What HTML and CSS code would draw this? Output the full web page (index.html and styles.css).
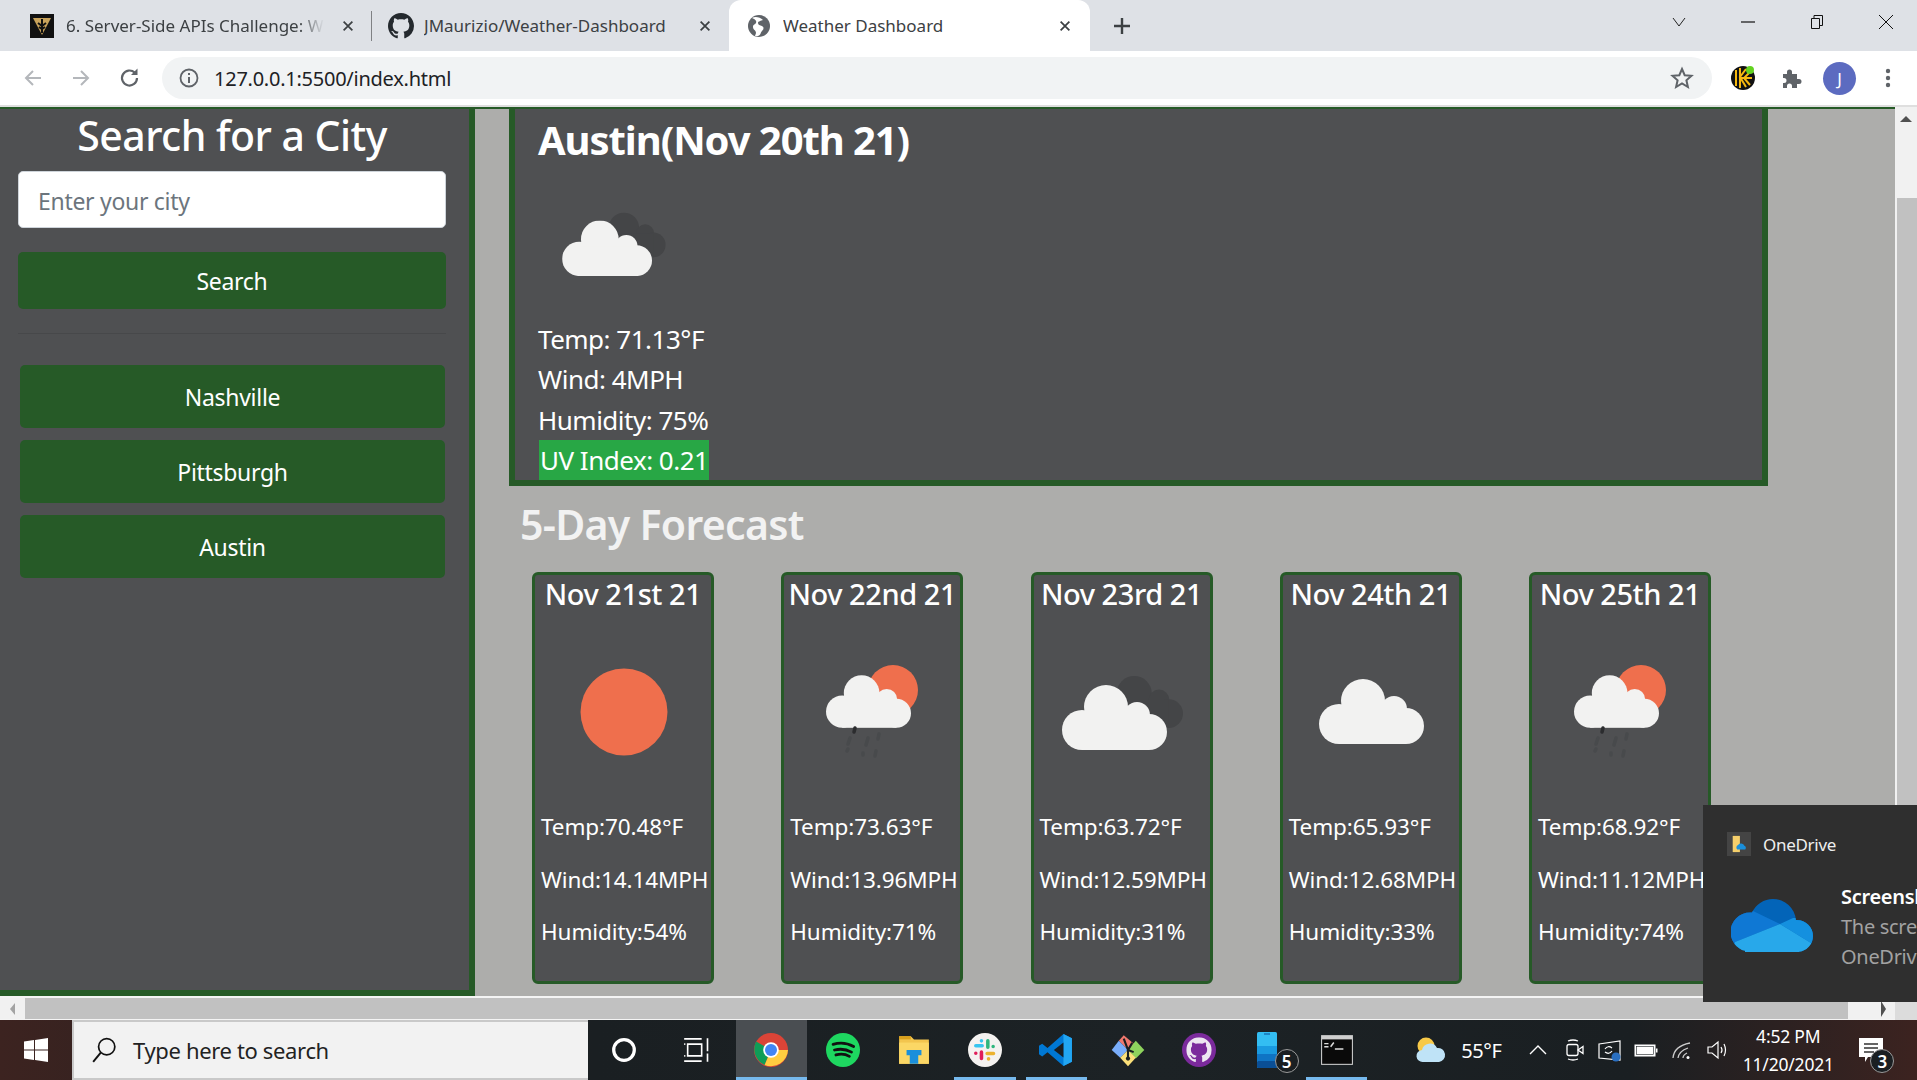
FILE: index.html
```html
<!DOCTYPE html>
<html lang="en">
<head>
<meta charset="utf-8">
<title>Weather Dashboard</title>
<link rel="stylesheet" href="styles.css">
</head>
<body>
<svg class="defs" width="0" height="0" aria-hidden="true">
  <defs>
    <symbol id="cloud" viewBox="0 0 105 65">
      <circle cx="20" cy="45" r="20"/><circle cx="44" cy="22" r="22"/><circle cx="75" cy="30" r="13"/><circle cx="87" cy="47" r="18"/><rect x="20" y="30" width="67" height="35"/>
    </symbol>
    <symbol id="ic-sun" viewBox="0 0 160 160"><ellipse cx="81" cy="80" rx="43.5" ry="43.5" fill="#ef6f4d"/></symbol>
    <symbol id="ic-clouds" viewBox="0 0 160 160">
      <use href="#cloud" x="57" y="42" width="84" height="56" fill="#444547"/>
      <use href="#cloud" x="20" y="53" width="105" height="65" fill="#f2f2f1"/>
    </symbol>
    <symbol id="ic-overcast" viewBox="0 0 160 160"><use href="#cloud" x="28" y="47" width="105" height="65" fill="#f2f2f1"/></symbol>
    <symbol id="ic-rain" viewBox="0 0 160 160">
      <circle cx="101" cy="58" r="25" fill="#ef6f4d"/>
      <use href="#cloud" x="34" y="43" width="85" height="53" fill="#f2f2f1"/>
      <path d="M63 96l-1 4" stroke="#2b2c2e" stroke-width="3.5" stroke-linecap="round"/>
      <path d="M58 106l-2 6M56 117l-1 2M76 106l-2 7M71 121l0 2M87 102l-1 5M84 119l-1 5" stroke="#484a4c" stroke-width="3.500" stroke-linecap="round"/>
    </symbol>
    <symbol id="ic-x" viewBox="0 0 16 16"><path d="M3 3l10 10M13 3L3 13" fill="none" stroke="#3c4043" stroke-width="2"/></symbol>
    <symbol id="ic-gh" viewBox="0 0 16 16"><path d="M8 0C3.58 0 0 3.58 0 8c0 3.54 2.29 6.53 5.47 7.59.4.07.55-.17.55-.38 0-.19-.01-.82-.01-1.49-2.01.37-2.53-.49-2.69-.94-.09-.23-.48-.94-.82-1.13-.28-.15-.68-.52-.01-.53.63-.01 1.08.58 1.23.82.72 1.21 1.87.87 2.33.66.07-.52.28-.87.51-1.07-1.78-.2-3.64-.89-3.64-3.95 0-.87.31-1.59.82-2.15-.08-.2-.36-1.02.08-2.12 0 0 .67-.21 2.2.82.64-.18 1.32-.27 2-.27s1.36.09 2 .27c1.53-1.04 2.2-.82 2.2-.82.44 1.1.16 1.92.08 2.12.51.56.82 1.27.82 2.15 0 3.07-1.87 3.75-3.65 3.95.29.25.54.73.54 1.48 0 1.07-.01 1.93-.01 2.2 0 .21.15.46.55.38A8.01 8.01 0 0016 8c0-4.42-3.58-8-8-8z"/></symbol>
    <clipPath id="od-clip"><circle cx="19" cy="33" r="19.500"/><circle cx="42" cy="23" r="23"/><circle cx="66" cy="37" r="16"/><rect x="14" y="30" width="54" height="23"/></clipPath>
  </defs>
</svg>

<div class="screen">
  <header class="tabstrip">
    <div class="tab tab-one">
      <svg class="favicon" viewBox="0 0 24 24"><rect width="24" height="24" fill="#111"/><path d="M3 4h18l-9 17z" fill="#c8a25a"/><path d="M12 5v14M8 9l4 3 4-3M9 13l3 2 3-2" stroke="#111" stroke-width="2" fill="none"/></svg>
      <span class="tab-title tab-title-fade">6. Server-Side APIs Challenge: We</span>
      <svg class="tab-x"><use href="#ic-x"/></svg>
    </div>
    <span class="tab-sep"></span>
    <div class="tab tab-two">
      <svg class="favicon fill-dark"><use href="#ic-gh"/></svg>
      <span class="tab-title">JMaurizio/Weather-Dashboard</span>
      <svg class="tab-x"><use href="#ic-x"/></svg>
    </div>
    <div class="tab tab-active">
      <svg class="favicon" viewBox="0 0 24 24"><circle cx="12" cy="12" r="11" fill="#5f6368"/><path d="M5 4c3 1 5 3 4 5s-3 1-3 4 3 3 3 6l-1 3c6 1 5-3 7-5s2-4 0-5-4-1-4-3 3-2 5-3c-3-3-8-4-11-2z" fill="#fff"/></svg>
      <span class="tab-title">Weather Dashboard</span>
      <svg class="tab-x"><use href="#ic-x"/></svg>
    </div>
    <svg class="new-tab" viewBox="0 0 20 20"><path d="M10 2v16M2 10h16" stroke="#3c4043" stroke-width="2.4"/></svg>
    <div class="window-controls">
      <svg viewBox="0 0 16 16"><path d="M2 4l6 8 6-8" fill="none" stroke="#222" stroke-width="1"/></svg>
      <svg viewBox="0 0 16 16"><path d="M1 8h14" stroke="#111" stroke-width="1.2"/></svg>
      <svg viewBox="0 0 16 16"><path d="M2.5 4.500h8v10h-8zM5 4.500v-3h8.500v10h-3" fill="none" stroke="#111" stroke-width="1"/></svg>
      <svg viewBox="0 0 16 16"><path d="M1 1l14 14M15 1L1 15" stroke="#111" stroke-width="1"/></svg>
    </div>
  </header>

  <nav class="toolbar">
    <svg class="tool" viewBox="0 0 24 24"><path d="M20 12H5M12 5l-7 7 7 7" fill="none" stroke="#b4b7bb" stroke-width="2"/></svg>
    <svg class="tool" viewBox="0 0 24 24"><path d="M4 12h15M12 5l7 7-7 7" fill="none" stroke="#b4b7bb" stroke-width="2"/></svg>
    <svg class="tool" viewBox="0 0 24 24"><path d="M19 12a7.500 7.500 0 1 1-2.300-5.400" fill="none" stroke="#5f6368" stroke-width="2.200"/><path d="M19.500 2.500v6.500H13z" fill="#5f6368"/></svg>
    <div class="omnibox">
      <svg class="info" viewBox="0 0 20 20"><circle cx="10" cy="10" r="8.500" fill="none" stroke="#5f6368" stroke-width="1.800"/><path d="M10 9v6M10 5v2" stroke="#5f6368" stroke-width="2"/></svg>
      <span class="url">127.0.0.1:5500/index.html</span>
      <svg class="star" viewBox="0 0 24 24"><path d="M12 3l2.700 6.200 6.800.6-5.100 4.500 1.500 6.700L12 17.500 6.100 21l1.500-6.700-5.100-4.500 6.800-.6z" fill="none" stroke="#5f6368" stroke-width="2"/></svg>
    </div>
    <div class="ext-group">
      <svg class="ext" viewBox="0 0 24 24"><circle cx="12" cy="12" r="12" fill="#111"/><path d="M5 4v16M9 2v20M15 3l-6 8 6 10M19 6l-6 6 6 7M9 12h12" stroke="#f6b80f" stroke-width="2" fill="none"/><circle cx="19" cy="4" r="4" fill="#62d320"/></svg>
      <svg class="ext" viewBox="0 0 24 24"><path d="M4 8h4V6a2.500 2.500 0 0 1 5 0v2h5v5h2a2.500 2.500 0 0 1 0 5h-2v4h-5v-2a2.500 2.500 0 0 0-5 0v2H4v-5h1a2.500 2.500 0 0 0 0-5H4z" fill="#5f6368"/></svg>
      <span class="avatar">J</span>
      <svg class="ext" viewBox="0 0 24 24"><circle cx="12" cy="5" r="2.200" fill="#5f6368"/><circle cx="12" cy="12" r="2.200" fill="#5f6368"/><circle cx="12" cy="19" r="2.200" fill="#5f6368"/></svg>
    </div>
  </nav>

  <div class="viewport">
    <div class="viewport-main">
      <div class="page">
        <aside class="sidebar">
          <h1 class="sidebar-title">Search for a City</h1>
          <input class="city-input" type="text" placeholder="Enter your city">
          <button class="btn btn-search">Search</button>
          <hr class="rule">
          <button class="btn btn-city">Nashville</button>
          <button class="btn btn-city">Pittsburgh</button>
          <button class="btn btn-city">Austin</button>
        </aside>
        <main class="content">
          <section class="today">
            <h2 class="today-title">Austin(Nov 20th 21)</h2>
            <svg class="today-icon"><use href="#ic-clouds"/></svg>
            <p class="today-line">Temp: 71.13°F</p>
            <p class="today-line">Wind: 4MPH</p>
            <p class="today-line">Humidity: 75%</p>
            <p class="today-line"><span class="uv">UV Index: 0.21</span></p>
          </section>
          <h2 class="forecast-title">5-Day Forecast</h2>
          <div class="cards">
            <article class="card">
              <h3 class="card-date">Nov 21st 21</h3>
              <svg class="card-icon"><use href="#ic-sun"/></svg>
              <p class="card-line">Temp:70.48°F</p>
              <p class="card-line">Wind:14.14MPH</p>
              <p class="card-line">Humidity:54%</p>
            </article>
            <article class="card">
              <h3 class="card-date">Nov 22nd 21</h3>
              <svg class="card-icon"><use href="#ic-rain"/></svg>
              <p class="card-line">Temp:73.63°F</p>
              <p class="card-line">Wind:13.96MPH</p>
              <p class="card-line">Humidity:71%</p>
            </article>
            <article class="card">
              <h3 class="card-date">Nov 23rd 21</h3>
              <svg class="card-icon"><use href="#ic-clouds"/></svg>
              <p class="card-line">Temp:63.72°F</p>
              <p class="card-line">Wind:12.59MPH</p>
              <p class="card-line">Humidity:31%</p>
            </article>
            <article class="card">
              <h3 class="card-date">Nov 24th 21</h3>
              <svg class="card-icon"><use href="#ic-overcast"/></svg>
              <p class="card-line">Temp:65.93°F</p>
              <p class="card-line">Wind:12.68MPH</p>
              <p class="card-line">Humidity:33%</p>
            </article>
            <article class="card">
              <h3 class="card-date">Nov 25th 21</h3>
              <svg class="card-icon"><use href="#ic-rain"/></svg>
              <p class="card-line">Temp:68.92°F</p>
              <p class="card-line">Wind:11.12MPH</p>
              <p class="card-line">Humidity:74%</p>
            </article>
          </div>
        </main>
      </div>
      <div class="hscroll">
        <span class="hscroll-btn"><i class="arrow-left"></i></span>
        <span class="hscroll-thumb"></span>
        <span class="hscroll-end"><i class="arrow-right"></i></span>
      </div>
    </div>
    <div class="vscroll">
      <span class="vscroll-track"><i class="arrow-up"></i></span>
      <span class="vscroll-thumb"></span>
      <span class="vscroll-corner"></span>
    </div>
  </div>

  <footer class="taskbar">
    <div class="start">
      <svg viewBox="0 0 24 24"><path d="M0 3.500l10-1.400v9.400H0zM11 2l13-2v11.500H11zM0 12.500h10v9.400L0 20.500zM11 12.500h13V24l-13-2z" fill="#fff"/></svg>
    </div>
    <div class="search-box">
      <svg viewBox="0 0 24 24"><circle cx="14.500" cy="9" r="7.500" fill="none" stroke="#111" stroke-width="1.600"/><path d="M9 14.500L2 23" stroke="#111" stroke-width="1.800"/></svg>
      <span>Type here to search</span>
    </div>
    <div class="task-item task-cortana">
      <svg viewBox="0 0 24 24"><circle cx="12" cy="12" r="9.500" fill="none" stroke="#fff" stroke-width="3"/></svg>
    </div>
    <div class="task-item task-view">
      <svg viewBox="0 0 24 24"><path d="M1 2.500h15M1 21.500h15M4 7h12v10H4zM1 7h1M1 17h1M21 2v11M21 15v7" fill="none" stroke="#fff" stroke-width="1.400"/></svg>
    </div>
    <div class="task-item task-active">
      <svg viewBox="0 0 48 48"><circle cx="24" cy="24" r="24" fill="#db4437"/><path d="M24 24L3 12a24 24 0 0 0 12 33z" fill="#0f9d58"/><path d="M24 24l-9 21a24 24 0 0 0 33-21z" fill="#ffcd40"/><circle cx="24" cy="24" r="11" fill="#fff"/><circle cx="24" cy="24" r="8.500" fill="#4285f4"/></svg>
    </div>
    <div class="task-item">
      <svg viewBox="0 0 48 48"><circle cx="24" cy="24" r="24" fill="#1ed760"/><path d="M10 16c10-3 20-2 29 3M12 24c8-2 17-1 24 3M14 31c7-2 14-1 19 2" fill="none" stroke="#111" stroke-width="4" stroke-linecap="round"/></svg>
    </div>
    <div class="task-item">
      <svg viewBox="0 0 32 32"><path d="M2 3h11l3 3h14v23H2z" fill="#f3c54e"/><path d="M2 3h11v3H2z" fill="#d9a01c"/><path d="M2 9h28v20H2z" fill="#fbd765"/><path d="M9 16h14v5h-3v8h-8v-8H9z" fill="#1a8fdb"/></svg>
    </div>
    <div class="task-item task-open">
      <svg viewBox="0 0 48 48"><circle cx="24" cy="24" r="24" fill="#f4f2f0"/><g fill="none" stroke-width="5" stroke-linecap="round"><path d="M11 18h9M19 11v.1" stroke="#36c5f0"/><path d="M28 11v9M35.500 19v.1" stroke="#2eb67d"/><path d="M27 29h9M29 36.500v.1" stroke="#ecb22e"/><path d="M19 27v9M11 28.500v.1" stroke="#e01e5a"/></g></svg>
    </div>
    <div class="task-item task-open">
      <svg viewBox="0 0 32 32"><path d="M23 1l8 4v22l-8 4L8 18l-5 4-3-2v-8l3-2 5 4z" fill="#0078d4"/><path d="M23 1l8 4v22l-8 4z" fill="#22a6f2"/><path d="M23 9l-9 7 9 7z" fill="#1a1f22"/></svg>
    </div>
    <div class="task-item">
      <svg viewBox="0 0 48 48"><path d="M24 24L11 11l7-8 15 13z" fill="#f0786e"/><path d="M24 24L11 11 1 24l12 11z" fill="#7aaefb"/><path d="M24 24l11-13 12 13-12 12z" fill="#8ed35d"/><path d="M24 24L13 35l11 12 11-12z" fill="#fbe07a"/><path d="M18 8l6 16v12M30 14l-6 10 8 3" fill="none" stroke="#1a1f22" stroke-width="3"/><circle cx="24" cy="36" r="3" fill="#1a1f22"/></svg>
    </div>
    <div class="task-item">
      <svg viewBox="0 0 48 48"><circle cx="24" cy="24" r="24" fill="#7b2a9c"/><use href="#ic-gh" x="6" y="6" width="36" height="36" fill="#ede6f1"/></svg>
    </div>
    <div class="task-item task-badged">
      <svg class="phone" viewBox="0 0 20 36"><rect width="20" height="36" rx="1.500" fill="#33bdf2"/><rect y="14" width="20" height="8" fill="#1a9ae0"/><rect y="22" width="20" height="7" fill="#0f74c4"/><rect y="29" width="20" height="7" rx="1" fill="#0a4f96"/><rect x="7" y="1.500" width="6" height="1" fill="#0a4f96"/></svg>
      <span class="badge">5</span>
    </div>
    <div class="task-item task-open task-cmd">
      <svg viewBox="0 0 32 32"><rect x="1" y="2" width="30" height="28" fill="#cfcfcf"/><rect x="2" y="6" width="28" height="23" fill="#0a0a0a"/><path d="M4 10h4M4 13h4M10 13l3-4M14 15h8" stroke="#ddd" stroke-width="1.400"/></svg>
    </div>
    <div class="tray">
      <svg class="tray-weather" viewBox="0 0 32 28"><circle cx="11" cy="10" r="8.500" fill="#f7c948"/><path d="M8 26a6 6 0 0 1-1-12 8 8 0 0 1 15-2 7 7 0 0 1 2 14z" fill="#bfe3f7"/></svg>
      <span class="tray-temp">55°F</span>
      <svg class="tray-icon" viewBox="0 0 24 24"><path d="M4 16l8-8 8 8" fill="none" stroke="#fff" stroke-width="1.400"/></svg>
      <svg class="tray-icon" viewBox="0 0 24 24"><rect x="5" y="6.500" width="11" height="11" rx="2" fill="none" stroke="#fff" stroke-width="1.300"/><path d="M16 12l5-3.500v7zM6 3q5-2 10 0M6 21q5 2 10 0" fill="none" stroke="#fff" stroke-width="1.300"/></svg>
      <svg class="tray-icon" viewBox="0 0 24 24"><path d="M1 6l21-3v19l-21-2z" fill="none" stroke="#fff" stroke-width="1.200"/><path d="M7 11q3-4 7-1M14 13q-3 4-7 1" fill="none" stroke="#fff" stroke-width="1.200"/><circle cx="18" cy="19" r="4.500" fill="#2a6fc0"/></svg>
      <svg class="tray-icon" viewBox="0 0 24 24"><rect x="1" y="7" width="20" height="11" fill="#fff" stroke="#fff"/><rect x="2.500" y="8.500" width="17" height="8" fill="#fff" stroke="#1a1f22" stroke-width=".6"/><rect x="22" y="10.500" width="1.500" height="4" fill="#fff"/></svg>
      <svg class="tray-icon" viewBox="0 0 24 24"><path d="M3 20q1-12 17-15M8 20q1-7 10-10M13 20q0-3 4-5" fill="none" stroke="#ccc" stroke-width="1.300"/><circle cx="18" cy="19.500" r="1.500" fill="#fff"/></svg>
      <svg class="tray-icon" viewBox="0 0 24 24"><path d="M2 9h4l6-5v16l-6-5H2zM15 9q2 3 0 6M18 6q3 6 0 12" fill="none" stroke="#fff" stroke-width="1.200"/></svg>
      <div class="clock"><span>4:52 PM</span><span>11/20/2021</span></div>
      <div class="notif">
        <svg viewBox="0 0 24 24"><path d="M0 0h24v19H9l-3 5v-5H0z" fill="#fff"/><path d="M5 6h14M5 10h14M5 14h10" stroke="#333" stroke-width="1.400"/></svg>
        <span class="badge">3</span>
      </div>
    </div>
  </footer>

  <aside class="toast">
    <div class="toast-head">
      <span class="toast-app">
        <svg viewBox="0 0 20 20"><path d="M3 1h8v18H3z" fill="#f5cf6b"/><path d="M8 16a3 3 0 0 1 1-5 4 4 0 0 1 7 1 2.500 2.500 0 0 1 1 4z" fill="#1a8fdb"/></svg>
      </span>
      <span>OneDrive</span>
    </div>
    <div class="toast-body">
      <svg class="toast-cloud" viewBox="0 0 82 53"><g clip-path="url(#od-clip)"><rect width="82" height="53" fill="#0364b8"/><path d="M0 11h20l29 14L4 43l-4 10z" fill="#0f78d4"/><path d="M49 25l13-6h20v34l-2-9z" fill="#1490df"/><path d="M49 25l31 19 2 9H0l4-10z" fill="#28a8ea"/></g></svg>
      <div class="toast-text">
        <strong>Screenshot saved</strong>
        <span>The screenshot was added to your</span>
        <span>OneDrive.</span>
      </div>
    </div>
  </aside>
</div>
</body>
</html>
```
FILE: styles.css
```css
* { box-sizing: border-box; }
html, body { margin: 0; height: 100%; overflow: hidden; }
body { font-family: "Noto Sans", "Open Sans", sans-serif; background: #adadab; }
.defs { position: absolute; }
.screen { position: relative; width: 1917px; height: 1080px; display: flex; flex-direction: column; overflow: hidden; }

/* browser chrome */
.tabstrip { height: 51px; background: #dee1e6; display: flex; align-items: center; flex: none; }
.tab { height: 51px; display: flex; align-items: center; flex: none; font-size: 17px; color: #3c4043; }
.tab-one { width: 372px; padding-left: 30px; }
.tab-two { width: 357px; padding-left: 16px; }
.tab-active { width: 361px; padding-left: 18px; background: #fff; border-radius: 12px 12px 0 0; color: #3c4043; }
.favicon { width: 24px; height: 24px; flex: none; margin-right: 12px; }
.tab-two .favicon { width: 26px; height: 26px; margin-right: 10px; }
.tab-active .favicon { width: 24px; height: 24px; margin-left: 0; }
.fill-dark { fill: #24292e; }
.tab-title { flex: 1; white-space: nowrap; overflow: hidden; letter-spacing: 0; }
.tab-title-fade { -webkit-mask-image: linear-gradient(to right, #000 90%, transparent 100%); mask-image: linear-gradient(to right, #000 90%, transparent 100%); }
.tab-x { width: 14px; height: 14px; flex: none; margin: 0 17px 0 17px; }
.tab-active .tab-x { margin-right: 18px; }
.tab-sep { width: 1px; height: 30px; background: #7f8184; flex: none; margin-left: -1px; }
.new-tab { width: 20px; height: 20px; margin-left: 22px; flex: none; }
.window-controls { margin-left: auto; display: flex; align-items: center; margin-top: -8px; padding-right: 23px; gap: 53px; }
.window-controls svg { width: 16px; height: 16px; }

.toolbar { height: 56px; flex: none; background: #fff; border-bottom: 2px solid #dfdfdf; display: flex; align-items: center; padding-left: 21px; }
.tool { width: 24px; height: 24px; margin-right: 24px; flex: none; }
.tool:nth-child(3) { margin-right: 21px; margin-left: 1px; }
.omnibox { width: 1550px; height: 42px; margin-left: -1px; background: #f1f3f4; border-radius: 21px; display: flex; align-items: center; padding: 0 18px 0 17px; flex: none; }
.info { width: 20px; height: 20px; margin-right: 15px; }
.url { font-size: 20px; color: #202124; letter-spacing: -0.25px; }
.star { width: 24px; height: 24px; margin-left: auto; }
.ext-group { display: flex; align-items: center; margin-left: 19px; gap: 24px; }
.ext { width: 24px; height: 24px; flex: none; }
.avatar { width: 33px; height: 33px; margin: 0 -4px; border-radius: 50%; background: #5c6bc0; color: #fff; font-size: 17px; display: flex; align-items: center; justify-content: center; }

/* viewport */
.viewport { flex: 1; display: flex; min-height: 0; }
.viewport-main { flex: 1; min-width: 0; display: flex; flex-direction: column; }
.page { flex: 1; min-height: 0; display: flex; background: #adadab; border-top: 2px solid #265a27; overflow: hidden; }
.hscroll { height: 24px; flex: none; display: flex; background: #f1f1f1; border-top: 2px solid #f4f4f4; border-bottom: 1px solid #f4f4f4; }
.hscroll-btn { width: 25px; display: flex; align-items: center; justify-content: center; flex: none; }
.hscroll-thumb { flex: 1; background: #c1c1c1; }
.hscroll-end { width: 47px; flex: none; display: flex; align-items: center; justify-content: flex-end; padding-right: 9px; }
.arrow-left { border: 6px solid transparent; border-right: 5px solid #a3a3a3; border-left: 0; }
.arrow-right { border: 8px solid transparent; border-left: 5px solid #505050; border-right: 0; }
.vscroll { width: 22px; flex: none; display: flex; flex-direction: column; background: #f1f1f1; }
.vscroll-track { height: 91px; flex: none; display: flex; justify-content: center; padding-top: 9px; }
.arrow-up { width: 0; height: 0; border: 6px solid transparent; border-bottom: 6px solid #505050; border-top: 0; }
.vscroll-thumb { height: 798px; flex: none; margin-left: 2px; background: #c1c1c1; }
.vscroll-corner { flex: 1; background: #dcdcdc; }

/* sidebar */
.sidebar { width: 475px; height: 887px; flex: none; background: #4f5052; border-right: 6px solid #265a27; border-bottom: 6px solid #265a27; padding: 0 23px 0 18px; display: flex; flex-direction: column; }
.sidebar-title { margin: 0 0 9px; font-size: 41px; line-height: 53px; font-weight: 500; color: #fff; text-align: center; letter-spacing: -0.55px; }
.city-input { height: 57px; border: 1px solid #ced4da; border-radius: 5px; padding: 2px 19px 0; font: 23px "Noto Sans", sans-serif; background: #fff; letter-spacing: -0.3px; }
.city-input::placeholder { color: #6c757d; opacity: 1; }
.btn { border: 0; border-radius: 5px; background: #265a27; color: #fff; font: 23px "Noto Sans", sans-serif; letter-spacing: -0.3px; }
.btn-search { height: 57px; margin-top: 24px; padding-top: 2px; }
.rule { width: 100%; margin: 24px 0 31px; border: 0; border-top: 1px solid #47484a; }
.btn-city { height: 63px; margin: 0 1px 12px 2px; }

/* main column */
.content { flex: 1; min-width: 0; padding-left: 34px; display: flex; flex-direction: column; }
.today { width: 1259px; height: 377px; flex: none; background: #4f5052; border: 6px solid #265a27; border-top: 0; padding: 0 0 0 23px; color: #fff; }
.today-title { margin: 2px 0 0; font-size: 40px; line-height: 58px; font-weight: 700; letter-spacing: -1.07px; }
.today-icon { display: block; width: 137px; height: 137px; margin: 6px 0 7px 7px; }
.today-line { margin: 0; font-size: 26px; line-height: 40.300px; letter-spacing: -0.5px; }
.uv { display: inline-block; background: #28a745; padding: 0 1px; margin-left: 1px; }
.forecast-title { margin: 12px 0 21px 11px; font-size: 41px; line-height: 53px; font-weight: 600; color: #f2f2f2; letter-spacing: -0.7px; }
.cards { display: flex; gap: 67.250px; margin-left: 23px; }
.card { width: 182px; height: 412px; flex: none; background: #4f5052; border: 3px solid #265a27; border-radius: 6px; color: #fff; padding: 0 0 0 6px; white-space: nowrap; }
.card-date { margin: 1px 0 0 -6px; font-size: 29px; line-height: 36px; font-weight: 500; text-align: center; letter-spacing: -0.45px; }
.card-icon { display: block; width: 160px; height: 160px; margin: 20px 0 0 2px; }
.card-line { margin: 0; font-size: 22.500px; line-height: 43px; letter-spacing: -0.1px; }
.card-icon + .card-line { margin-top: 13px; }
.card-line + .card-line { margin-top: 9.500px; }

/* taskbar */
.taskbar { height: 60px; flex: none; display: flex; align-items: stretch; background: linear-gradient(to right, #3c2320 0, #1a1f22 31%, #1c2225 60%, #1a1f22 85%, #3c2320 100%); color: #fff; }
.start { width: 72px; display: flex; align-items: center; justify-content: center; flex: none; }
.start svg { width: 24px; height: 24px; }
.search-box { width: 516px; flex: none; background: #f2f2f2; border: 2px solid #c9c9c9; border-bottom-width: 2px; border-right: 0; display: flex; align-items: center; padding-left: 17px; color: #222; font-size: 22px; letter-spacing: -0.35px; }
.search-box svg { width: 26px; height: 26px; margin-right: 16px; flex: none; }
.task-item { width: 71.300px; flex: none; position: relative; display: flex; align-items: center; justify-content: center; }
.task-item svg { width: 34px; height: 34px; }
.task-cortana svg { width: 26px; height: 26px; }
.task-view { margin-left: 2px; }
.task-view svg { width: 28px; height: 28px; }
.task-active { background: #4a4e52; margin-left: 3px; }
.task-active::after, .task-open::after { content: ""; position: absolute; left: 5px; right: 5px; bottom: 0; height: 3px; background: #76b9ed; }
.task-active::after { left: 0; right: 0; }
.task-cmd { margin-left: -5px; }
.phone.phone { width: 20px; height: 36px; margin-right: 6px; }
.badge { position: absolute; min-width: 24px; height: 24px; border-radius: 50%; border: 1px solid #9a9a9a; background: #1a1f22; color: #fff; font-size: 17px; font-weight: 600; display: flex; align-items: center; justify-content: center; }
.task-badged .badge { left: 40px; top: 29px; }
.tray { flex: 1; display: flex; align-items: center; padding-left: 43px; }
.tray-weather { width: 32px; height: 28px; flex: none; }
.tray-temp { font-size: 20px; margin: 0 25px 0 14px; width: 40px; white-space: nowrap; letter-spacing: -0.4px; }
.tray-icon { width: 24px; height: 24px; margin-right: 12px; flex: none; }
.clock { width: 90px; margin-left: 1px; display: flex; flex-direction: column; align-items: center; font-size: 17.500px; line-height: 28px; white-space: nowrap; letter-spacing: -0.2px; }
.notif { position: relative; margin-left: 26px; width: 24px; height: 24px; }
.notif svg { width: 24px; height: 24px; display: block; }
.notif .badge { left: 11px; top: 11px; }

/* toast */
.toast { position: absolute; left: 1703px; top: 805px; right: 0; height: 197px; background: #2f2f2f; color: #fff; overflow: hidden; white-space: nowrap; padding: 27px 0 0 24px; font-size: 17px; }
.toast-head { display: flex; align-items: center; gap: 12px; font-size: 17px; color: #eee; letter-spacing: -0.3px; }
.toast-app { width: 24px; height: 24px; background: #444; display: flex; align-items: center; justify-content: center; }
.toast-app svg { width: 18px; height: 18px; }
.toast-body { display: flex; align-items: flex-start; margin-top: 26px; }
.toast-cloud { width: 82px; height: 53px; margin: 17px 28px 0 4px; flex: none; }
.toast-text { display: flex; flex-direction: column; font-size: 20px; line-height: 30px; color: #a2a2a2; letter-spacing: -0.3px; }
.toast-text strong { color: #fff; font-weight: 600; }
```
